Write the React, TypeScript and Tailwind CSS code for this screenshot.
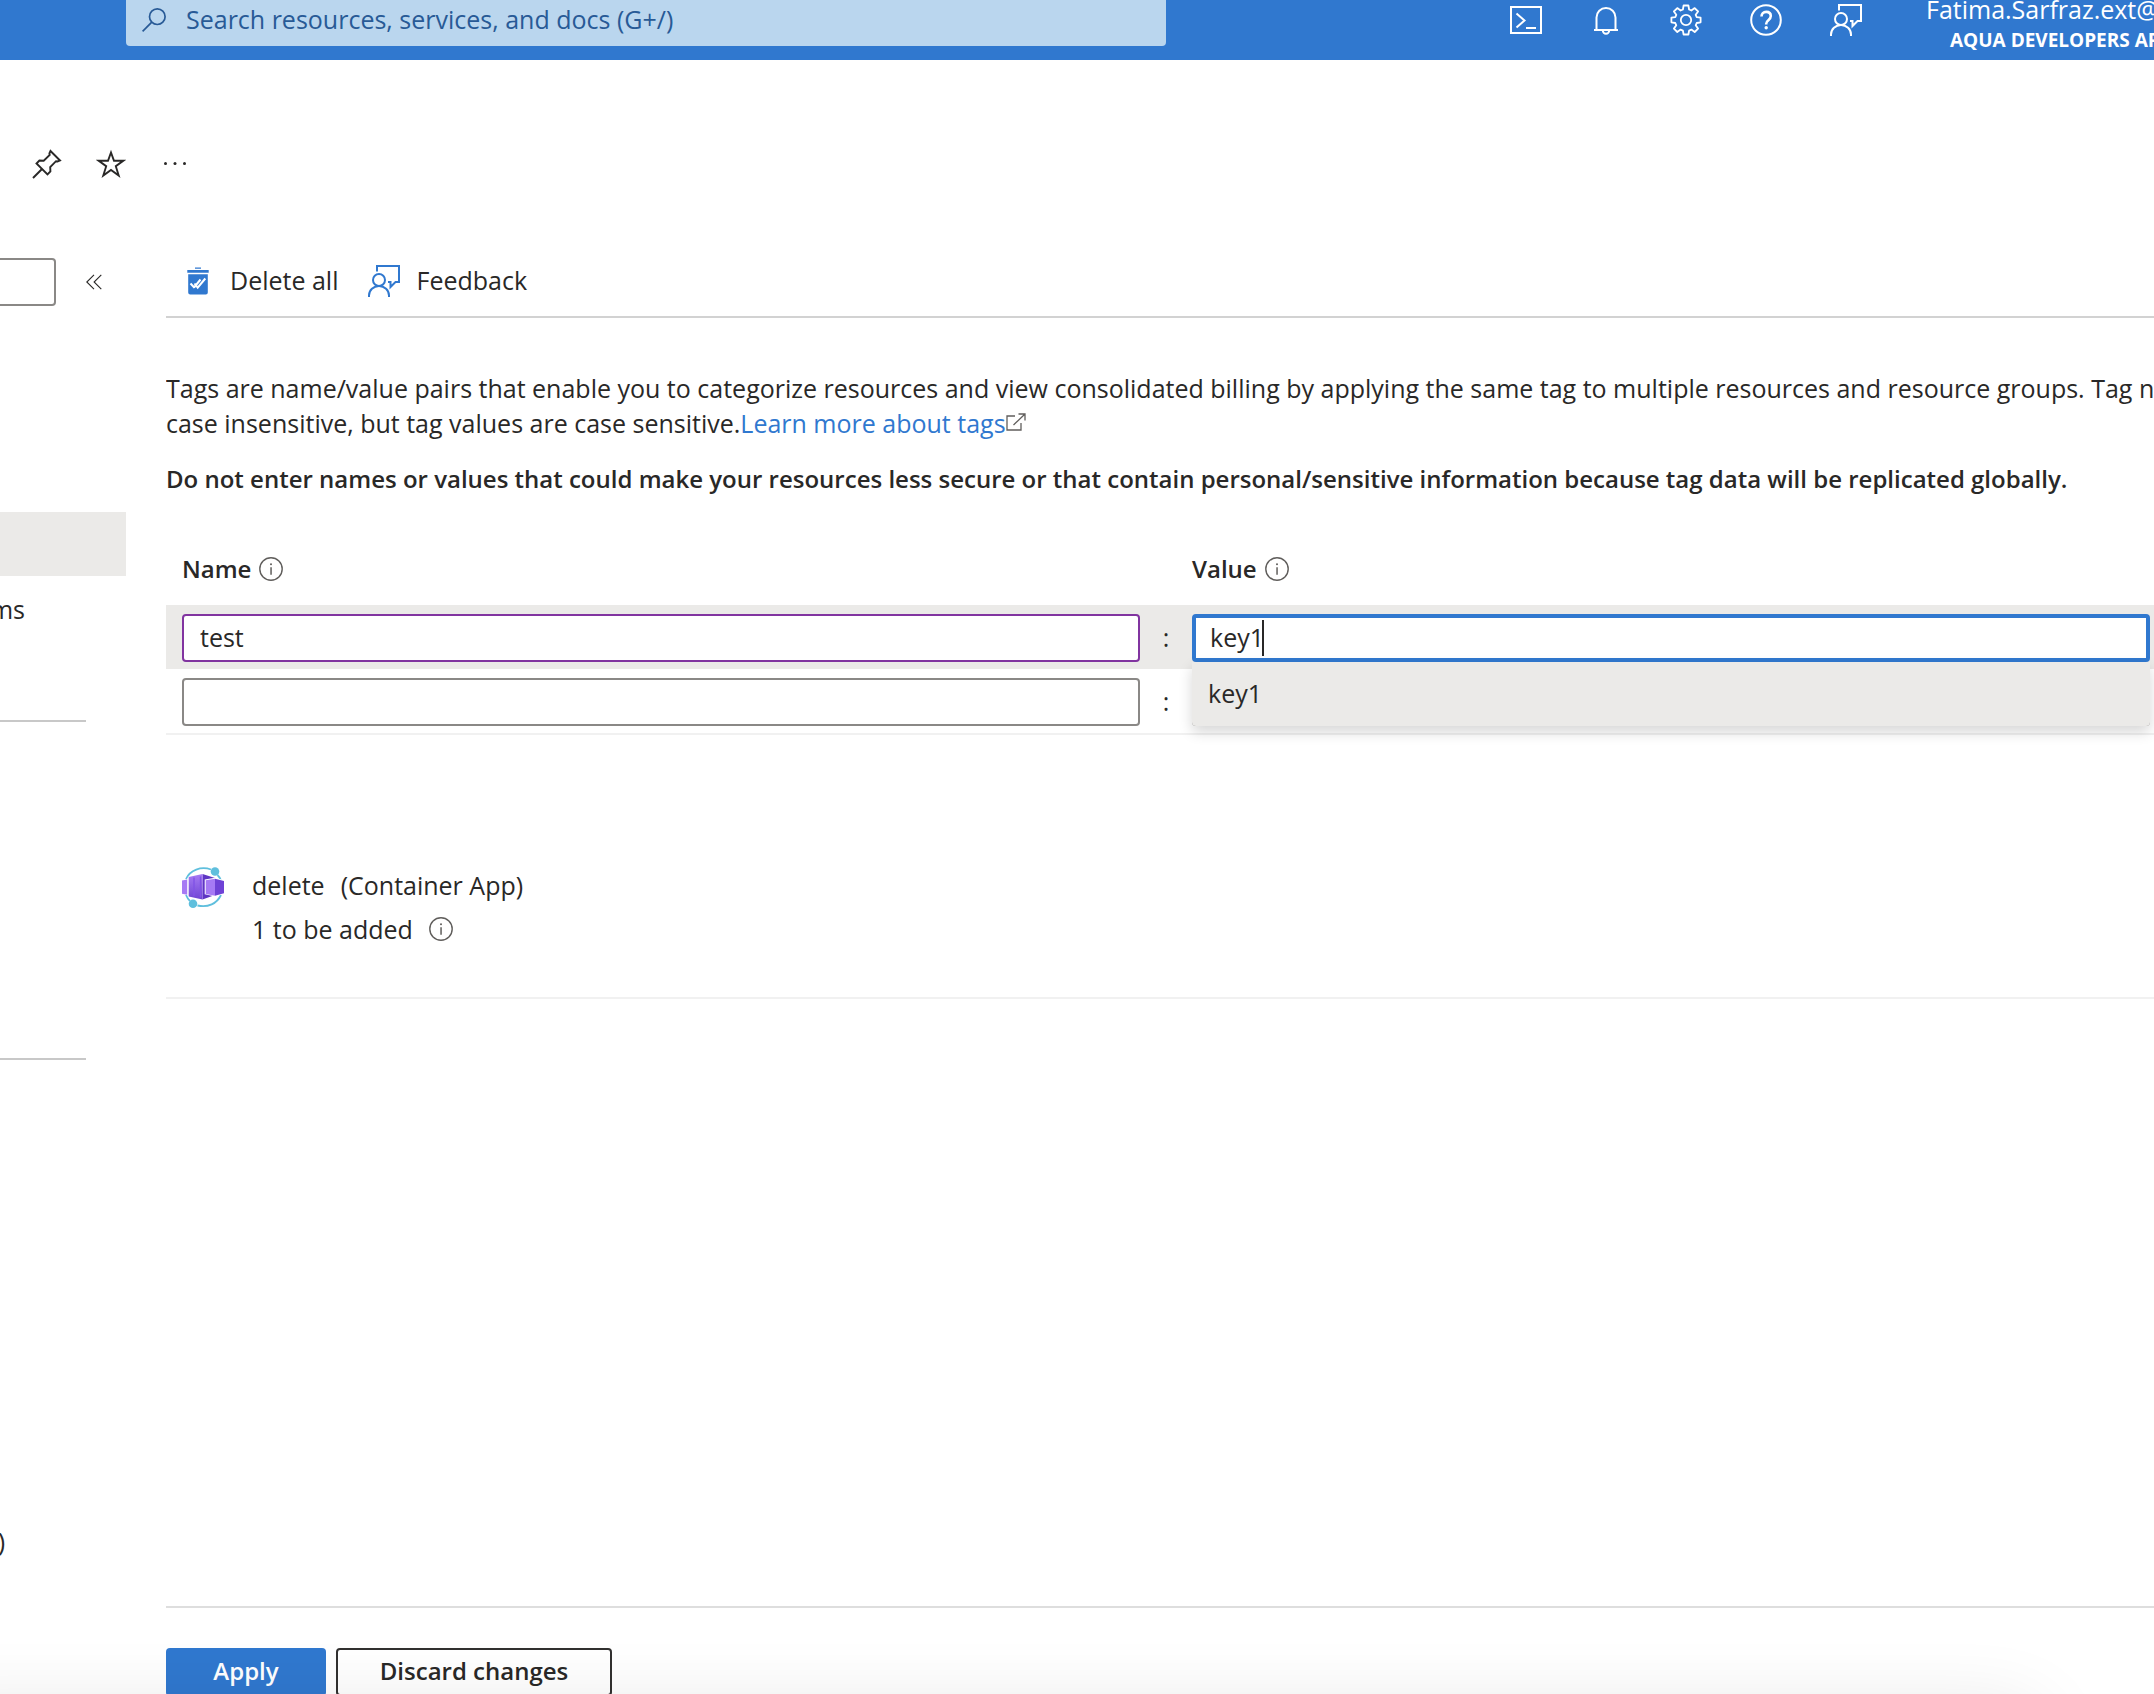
import { useState, type ReactNode } from 'react';
import clsx from 'clsx';

type IconProps = { className?: string };

function SearchIcon({ className }: IconProps) {
  return (
    <svg viewBox="0 0 24 24" className={className} fill="none" stroke="currentColor" strokeWidth="1.7">
      <circle cx="15.3" cy="8.7" r="7.8" />
      <path d="M9.8 14.2 0.6 23.4" />
    </svg>
  );
}

function CloudShellIcon({ className }: IconProps) {
  return (
    <svg viewBox="0 0 32 32" className={className} fill="none" stroke="currentColor" strokeWidth="2">
      <rect x="1" y="3" width="30" height="26" />
      <path d="M6.5 9.5 14.5 16.5 6.5 23.5" />
      <path d="M16 24h10" />
    </svg>
  );
}

function BellIcon({ className }: IconProps) {
  return (
    <svg viewBox="0 0 32 32" className={className} fill="none" stroke="currentColor" strokeWidth="2">
      <path d="M6.5 26V13.5a9.5 9.5 0 0 1 19 0V26" />
      <path d="M4 26h24" />
      <path d="M12.8 26.5a3.2 3.2 0 0 0 6.4 0" />
    </svg>
  );
}

function GearIcon({ className }: IconProps) {
  return (
    <svg viewBox="0 0 32 32" className={className} fill="none" stroke="currentColor" strokeWidth="1.8" strokeLinejoin="round">
      <path d="M13.6 1.5h4.8l.7 4 2.3 1 3.3-2.4 3.4 3.4-2.4 3.3 1 2.3 3.9.6v4.6l-3.9.7-1 2.3 2.4 3.3-3.4 3.4-3.3-2.4-2.3 1-.7 3.9h-4.8l-.7-3.9-2.3-1L7.3 28l-3.4-3.4 2.4-3.3-1-2.3-3.9-.7v-4.6l3.9-.6 1-2.3-2.4-3.3L7.3 4.1l3.3 2.4 2.3-1z" />
      <circle cx="16" cy="16" r="5.2" />
    </svg>
  );
}

function HelpIcon({ className }: IconProps) {
  return (
    <svg viewBox="0 0 32 32" className={className} fill="none" stroke="currentColor">
      <circle cx="16" cy="16" r="14.8" strokeWidth="2" />
      <path d="M11.5 12.6c0-2.9 1.9-4.7 4.7-4.7s4.6 1.7 4.6 4.2c0 4-4.6 4.2-4.6 7.6v.8" strokeWidth="2.6" />
      <circle cx="16.2" cy="23.7" r="1.7" fill="currentColor" stroke="none" />
    </svg>
  );
}

function FeedbackIcon({ className }: IconProps) {
  return (
    <svg viewBox="0 0 32 32" className={className} fill="none" stroke="currentColor" strokeWidth="2">
      <circle cx="11" cy="15" r="6" />
      <path d="M1 32v-1.5a10 9.5 0 0 1 20 0V32" />
      <path d="M9 6.5V1h22v16h-3.500l-5 5v-5H20" />
    </svg>
  );
}

function PinIcon({ className }: IconProps) {
  return (
    <svg viewBox="0 0 30 30" className={className} fill="none" stroke="currentColor" strokeWidth="1.9">
      <path d="M18.5 2 28 11.5l-2.500 1-1.500-.3-5.800 6 .2 4.300-2.900 3L4.500 14.500l2.900-3 4.300.3 6-5.800-.3-1.600z" />
      <path d="M10 20 1 29" />
    </svg>
  );
}

function StarIcon({ className }: IconProps) {
  return (
    <svg viewBox="0 0 30 30" className={className} fill="none" stroke="currentColor" strokeWidth="1.9">
      <path d="M15 3.5l3 8.300h9.200l-7.400 5.400 2.900 9.300L15 20.900l-7.700 5.600 2.900-9.300L2.800 11.800H12z" />
    </svg>
  );
}

function MoreIcon({ className }: IconProps) {
  return (
    <svg viewBox="0 0 30 30" className={className} fill="currentColor">
      <circle cx="5.5" cy="14.5" r="1.5" />
      <circle cx="15" cy="14.5" r="1.5" />
      <circle cx="24.500" cy="14.5" r="1.5" />
    </svg>
  );
}

function CollapseIcon({ className }: IconProps) {
  return (
    <svg viewBox="0 0 16 16" className={className} fill="none" stroke="currentColor" strokeWidth="1.1">
      <path d="M8 .8.8 8 8 15.2M15.3.8 8.1 8l7.2 7.2" />
    </svg>
  );
}

function DeleteAllIcon({ className }: IconProps) {
  return (
    <svg viewBox="0 0 22 28" className={className}>
      <path fill="currentColor" d="M8 .5h6v1.300H8zM.3 3h21.400v2.800H.3zM1.200 7.200h19.600v18.300a2 2 0 0 1-2 2H3.200a2 2 0 0 1-2-2z" />
      <path fill="none" stroke="#fff" strokeWidth="2" d="M3.500 16.500l4 4.200M7.500 16.500l3.200 4.200 7.600-9.200M7 20.500l6.500-8" />
    </svg>
  );
}

function InfoIcon({ className }: IconProps) {
  return (
    <svg viewBox="0 0 24 24" className={className}>
      <circle cx="12" cy="12" r="11.2" fill="none" stroke="currentColor" strokeWidth="1.4" />
      <path d="M11.3 10.2h1.5v7.600h-1.500z" fill="currentColor" />
      <circle cx="12" cy="7.2" r="1" fill="currentColor" />
    </svg>
  );
}

function ExternalIcon({ className }: IconProps) {
  return (
    <svg viewBox="0 0 20 20" className={className} fill="none" stroke="currentColor" strokeWidth="1.3">
      <path d="M9 3H1v14h14v-7" />
      <path d="M12.500 1H19v6.500M19 1 7.500 12" />
    </svg>
  );
}

function ContainerAppIcon({ className }: IconProps) {
  return (
    <svg viewBox="0 0 42 42" className={className}>
      <defs>
        <linearGradient id="ca-front" x1="0" y1="0" x2="0" y2="1">
          <stop offset="0" stopColor="#a67af4" />
          <stop offset="1" stopColor="#6f46d4" />
        </linearGradient>
      </defs>
      <g fill="none" stroke="#5fbfdd" strokeWidth="1.8">
        <path d="M4 12C8 3 19-1 29 2.500" />
        <path d="M35.500 8c1.500 1.500 2.500 3 3.300 5" />
        <path d="M39 28C35 36.500 26 41 15.500 38.500" />
        <path d="M4 28c1 2.500 2 4 4 6" />
      </g>
      <circle cx="33" cy="4.500" r="4.300" fill="#5fbfdd" />
      <circle cx="11" cy="36.700" r="4.300" fill="#5fbfdd" />
      <path d="M0 13.500l5.200-1v15.300L0 26.700z" fill="#a67af4" />
      <path d="M20.500 7l12.500 4v17l-12.500 4.500z" fill="#5f36c4" />
      <path d="M6.700 10 20.500 7v25.500L6.700 29.500z" fill="url(#ca-front)" />
      <path d="M12 10.500v18.500M18.500 9.500v21" stroke="#8153e6" strokeWidth="1.400" />
      <path d="M22.700 12.500l10.300-1.700L42 13v14l-9 2.500-10.300-2.200z" fill="#fff" />
      <path d="M23.700 13.200l9.300-1.400v17l-9.300-1.900z" fill="#a67af4" />
      <path d="M33 11.800l9 2.100v12.400l-9 2.500z" fill="#6f42d6" />
    </svg>
  );
}

const headerActions = [
  { label: 'Cloud Shell', Icon: CloudShellIcon },
  { label: 'Notifications', Icon: BellIcon },
  { label: 'Settings', Icon: GearIcon },
  { label: 'Help', Icon: HelpIcon },
  { label: 'Feedback', Icon: FeedbackIcon },
];

function Header() {
  return (
    <header className="flex h-[60px] shrink-0 justify-between overflow-hidden bg-[#3078cf] pl-[126px] text-white">
      <label className="flex h-[46px] w-[1040px] items-start rounded-b bg-[#bad6ee] pl-4 text-[#285a96]">
        <SearchIcon className="mt-2 h-6 w-6 shrink-0" />
        <input
          type="search"
          aria-label="Search resources, services, and docs"
          placeholder="Search resources, services, and docs (G+/)"
          className="ml-5 h-[38px] flex-1 bg-transparent outline-none placeholder:text-[#285a96]"
        />
      </label>
      <div className="flex">
        <div className="flex gap-12 pt-1">
          {headerActions.map(({ label, Icon }) => (
            <button key={label} type="button" aria-label={label} className="h-8 w-8">
              <Icon className="h-8 w-8" />
            </button>
          ))}
        </div>
        <div className="ml-16 flex h-[54px] w-[228px] flex-col justify-end whitespace-nowrap">
          <span className="leading-[34px]">Fatima.Sarfraz.ext@</span>
          <span className="pl-6 text-[19px] leading-7 font-bold">AQUA DEVELOPERS AP</span>
        </div>
      </div>
    </header>
  );
}

function TitleActions() {
  return (
    <div className="flex gap-[34px] pt-[89px] pb-[79px] pl-8">
      <button type="button" aria-label="Pin">
        <PinIcon className="h-[30px] w-[30px]" />
      </button>
      <button type="button" aria-label="Favorite">
        <StarIcon className="h-[30px] w-[30px]" />
      </button>
      <button type="button" aria-label="More">
        <MoreIcon className="h-[30px] w-[30px]" />
      </button>
    </div>
  );
}

function Sidebar() {
  return (
    <aside className="w-[166px] shrink-0">
      <div className="flex items-center gap-[30px]">
        <input
          type="text"
          aria-label="Search menu"
          className="h-12 w-14 rounded-r border-2 border-l-0 border-[#8a8886] px-2 outline-none"
        />
        <button type="button" aria-label="Collapse menu">
          <CollapseIcon className="h-4 w-4" />
        </button>
      </div>
      <nav className="mt-[206px]">
        <a href="#tags" aria-label="Tags" className="block h-16 w-[126px] bg-[#ebeae8]" />
        <a href="#problems" className="flex h-16 w-[25px] items-center justify-end overflow-hidden pt-1">
          ms
        </a>
        <hr className="mt-20 w-[86px] border-t-2 border-[#c8c8c8]" />
        <hr className="mt-[336px] w-[86px] border-t-2 border-[#c8c8c8]" />
        <a href="#preview" className="mt-[450px] flex h-16 w-[5px] items-center justify-end overflow-hidden">
          )
        </a>
      </nav>
    </aside>
  );
}

function CommandButton({ icon, children }: { icon: ReactNode; children: ReactNode }) {
  return (
    <button type="button" className="flex items-center">
      {icon}
      {children}
    </button>
  );
}

const fieldClass = 'h-12 w-full rounded bg-white pb-0.5 outline-none';
const rowClass = 'grid grid-cols-[1fr_52px_1fr] items-start pt-[9px] pr-1 pl-4';

function Separator() {
  return <span className="text-center leading-[46px]">:</span>;
}

function TagEditor() {
  const [name, setName] = useState('test');
  const [value, setValue] = useState('key1');

  return (
    <section className="mt-[55px]">
      <div className="mb-5 grid h-[34px] grid-cols-[1fr_52px_1fr] items-center pr-1 pl-4 text-[24px] font-semibold">
        <div className="flex items-center gap-2">
          <label htmlFor="tag-name">Name</label>
          <InfoIcon className="h-6 w-6 text-[#605e5c]" />
        </div>
        <div className="col-start-3 flex items-center gap-2">
          <label htmlFor="tag-value">Value</label>
          <InfoIcon className="h-6 w-6 text-[#605e5c]" />
        </div>
      </div>

      <div className={clsx(rowClass, 'h-16 bg-[#ebeae8]')}>
        <input
          id="tag-name"
          type="text"
          value={name}
          onChange={(e) => setName(e.target.value)}
          className={clsx(fieldClass, 'border-2 border-[#8134a0] px-4')}
        />
        <Separator />
        <div className="relative">
          <input
            id="tag-value"
            type="text"
            value={value}
            onChange={(e) => setValue(e.target.value)}
            className={clsx(fieldClass, 'border-4 border-[#3078cf] px-[14px] caret-transparent')}
          />
          <span className="absolute top-1.5 left-[70px] h-9 w-0.5 bg-[#292827]" />
          <ul className="absolute top-12 z-10 w-full rounded-b bg-[#ebeae8] shadow-[0_6px_14px_rgba(0,0,0,0.16)]">
            <li>
              <button type="button" className="block h-16 w-full px-4 text-left" onClick={() => setValue('key1')}>
                key1
              </button>
            </li>
          </ul>
        </div>
      </div>

      <div className={clsx(rowClass, 'h-[66px] border-b-2 border-[#f1f1f1]')}>
        <input type="text" aria-label="New tag name" className={clsx(fieldClass, 'border-2 border-[#8a8886] px-4')} />
        <Separator />
        <input type="text" aria-label="New tag value" className={clsx(fieldClass, 'border-2 border-[#8a8886] px-4')} />
      </div>
    </section>
  );
}

function ResourceSummary() {
  return (
    <section className="mt-32 flex border-b-2 border-[#f1f1f1] pb-[46px] pl-4">
      <ContainerAppIcon className="mt-1 h-[42px] w-[42px]" />
      <div className="ml-7 leading-[44px]">
        <div className="flex gap-4">
          <span>delete</span>
          <span>(Container App)</span>
        </div>
        <div className="flex items-center gap-4">
          <span>1 to be added</span>
          <InfoIcon className="h-6 w-6 text-[#605e5c]" />
        </div>
      </div>
    </section>
  );
}

export default function App() {
  return (
    <div className="relative flex h-screen flex-col overflow-hidden bg-white font-['Open_Sans',sans-serif] text-[25px] text-[#292827]">
      <Header />
      <TitleActions />
      <div className="flex min-h-0 flex-1">
        <Sidebar />
        <div className="flex min-w-0 flex-1 flex-col">
          <main>
            <div className="flex h-[60px] items-center gap-[30px] border-b-2 border-[#d2d2d2] pb-3 pl-[21px]">
              <CommandButton icon={<DeleteAllIcon className="mr-[21px] h-7 w-[22px] text-[#3078cf]" />}>
                Delete all
              </CommandButton>
              <CommandButton icon={<FeedbackIcon className="mr-4 h-8 w-8 text-[#3078cf]" />}>Feedback</CommandButton>
            </div>
            <p className="mt-[53px] overflow-hidden leading-[35px] whitespace-nowrap">
              Tags are name/value pairs that enable you to categorize resources and view consolidated billing by
              applying the same tag to multiple resources and resource groups. Tag names are
              <br />
              case insensitive, but tag values are case sensitive.
              <a href="#learn-more" className="text-[#3078cf]">
                Learn more about tags
                <ExternalIcon className="inline h-5 w-5 align-baseline text-[#605e5c]" />
              </a>
            </p>
            <p className="mt-5 overflow-hidden text-[24px] leading-[35px] font-semibold whitespace-nowrap">
              Do not enter names or values that could make your resources less secure or that contain
              personal/sensitive information because tag data will be replicated globally.
            </p>
            <TagEditor />
            <ResourceSummary />
          </main>
          <footer className="mt-auto flex h-[88px] shrink-0 gap-[10px] border-t-2 border-[#dedede] pt-10 text-[24px] font-semibold">
            <button type="button" className="h-12 w-40 rounded bg-[#3078cf] pb-0.5 text-white">
              Apply
            </button>
            <button type="button" className="h-12 w-[276px] rounded border-2 border-[#323130] pb-0.5">
              Discard changes
            </button>
          </footer>
        </div>
      </div>
      <div className="pointer-events-none absolute top-full right-[120px] -left-20 mt-5 h-40 shadow-[0_0_80px_rgba(0,0,0,0.12)]" />
    </div>
  );
}
